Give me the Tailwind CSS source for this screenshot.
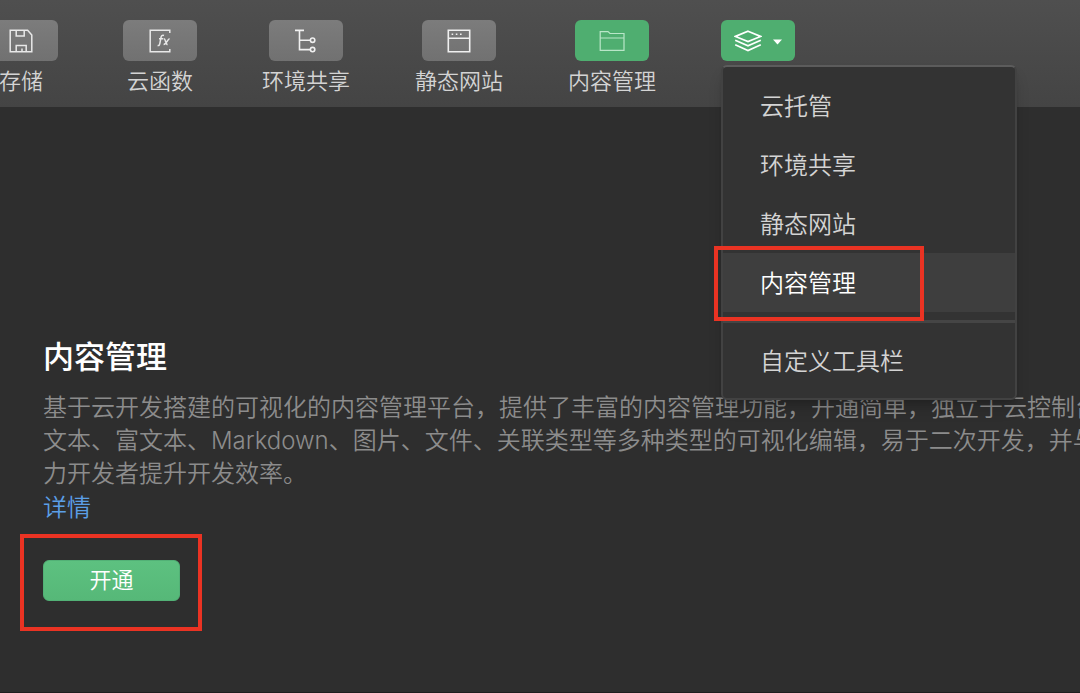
<!DOCTYPE html>
<html lang="zh-CN">
<head>
<meta charset="utf-8">
<meta name="viewport" content="width=device-width, initial-scale=1">
<title>内容管理</title>
<script src="https://cdn.jsdelivr.net/npm/@tailwindcss/browser@4"></script>
</head>
<body class="flex min-h-screen flex-col overflow-x-hidden border-b border-[#1f1f1f] bg-[#2e2e2e] font-['Inter','Noto_Sans_CJK_SC',sans-serif] font-[350] text-[#d4d4d4]">
<header class="h-[107px] bg-linear-to-b from-[#4f4f4f] to-[#444444] pt-5">
  <nav class="-ml-4 flex items-start gap-[65px] text-[22px] leading-[30px] whitespace-nowrap" aria-label="工具栏">
    <div class="flex shrink-0 flex-col items-center gap-[5px]">
      <button id="b1" aria-labelledby="l1" class="flex h-[41px] w-[74px] items-center justify-center rounded-md bg-linear-to-b from-[#7c7c7c] to-[#717171] text-[#e8e8e8]">
        <svg class="size-6" viewBox="0 0 24 24" fill="none" stroke="currentColor" stroke-width="1.5"><path d="M1.2 1.2H18.6L22.8 6V22.8H1.2ZM7.2 1.2V7H15.2V1.2M7.2 22.8V16.4H17.2V22.8M13 19.6V22.8"/></svg>
      </button>
      <label id="l1" for="b1">存储</label>
    </div>
    <div class="flex shrink-0 flex-col items-center gap-[5px]">
      <button id="b2" aria-labelledby="l2" class="flex h-[41px] w-[74px] items-center justify-center rounded-md bg-linear-to-b from-[#7c7c7c] to-[#717171] text-[#e8e8e8]">
        <svg class="size-6" viewBox="0 0 24 24" fill="none" stroke="currentColor" stroke-width="1.5"><path d="M21.8 4V1.2H2.2V22.8H21.8V20"/><path d="M16 6.5c-1.8-.7-2.7.3-3 2l-1.2 6.2c-.3 1.6-1 2.2-2.2 1.8M11 9.8h4.4M16 9.8c1.6 0 1.6 5.7 3.6 5.7M21.6 9.8c-1.8 0-3.4 5.7-6 5.7"/></svg>
      </button>
      <label id="l2" for="b2">云函数</label>
    </div>
    <div class="flex shrink-0 flex-col items-center gap-[5px]">
      <button id="b3" aria-labelledby="l3" class="flex h-[41px] w-[74px] items-center justify-center rounded-md bg-linear-to-b from-[#7c7c7c] to-[#717171] text-[#f0f0f0]">
        <svg class="size-6" viewBox="0 0 24 24" fill="none" stroke="currentColor" stroke-width="1.6"><path d="M1 1.4H10M5.5 1.4V20.6H16.4M5.5 11.2H16.4"/><circle cx="18.6" cy="11.2" r="2.2"/><circle cx="18.6" cy="20.6" r="2.2"/></svg>
      </button>
      <label id="l3" for="b3">环境共享</label>
    </div>
    <div class="flex shrink-0 flex-col items-center gap-[5px]">
      <button id="b4" aria-labelledby="l4" class="flex h-[41px] w-[74px] items-center justify-center rounded-md bg-linear-to-b from-[#7c7c7c] to-[#717171] text-[#f0f0f0]">
        <svg class="size-6" viewBox="0 0 24 24" fill="none" stroke="currentColor" stroke-width="1.6"><path d="M1.3 1.3H22.7V22.7H1.3ZM1.3 9.2H22.7"/><path d="M4.6 5.3h1.6M8.8 5.3h1.6M13 5.3h1.6"/></svg>
      </button>
      <label id="l4" for="b4">静态网站</label>
    </div>
    <div class="flex shrink-0 flex-col items-center gap-[5px]">
      <button id="b5" aria-labelledby="l5" class="flex h-[41px] w-[74px] items-center justify-center rounded-md bg-[#4fae70] text-[#b9e6c8]">
        <svg class="h-6 w-[26px]" viewBox="0 0 26 24" fill="none" stroke="currentColor" stroke-width="1.2"><path d="M1.2 21.3V2.6H9L11 4.5H25V21.3ZM1.2 9H25"/></svg>
      </button>
      <label id="l5" for="b5">内容管理</label>
    </div>
    <div class="relative shrink-0">
      <button aria-label="更多" aria-expanded="true" class="flex h-[41px] w-[74px] items-center justify-center gap-[11px] rounded-md bg-[#4fae70] text-white">
        <svg class="h-6 w-7" viewBox="0 0 28 24" fill="none" stroke="currentColor" stroke-width="1.6"><path d="M14 2.2L26.6 7.4L14 12.6L1.4 7.4ZM1.2 11.2L14 16.8L26.8 11.2M1.2 15.8L14 21.6L26.8 15.8"/></svg>
        <svg class="h-6 w-[9px]" viewBox="0 0 9 24" fill="currentColor"><path d="M0 10.4H9L4.5 15.4Z"/></svg>
      </button>
      <div role="menu" class="absolute top-[45px] left-0 z-10 w-[296px] rounded-md border-2 border-[#424242] border-t-[#5c5c5c] bg-[#333333] pt-[9px] pb-2 text-2xl shadow-lg shadow-black/20">
        <button role="menuitem" class="flex h-[59px] w-full items-center px-[37px] pt-0.5">云托管</button>
        <button role="menuitem" class="flex h-[59px] w-full items-center px-[37px] pt-0.5">环境共享</button>
        <button role="menuitem" class="flex h-[59px] w-full items-center px-[37px] pt-0.5">静态网站</button>
        <button role="menuitem" class="relative flex h-[59px] w-full items-center bg-[#3e3e3e] px-[37px] pt-0.5 text-white">内容管理<span class="absolute -top-[7px] -left-[9px] h-[75px] w-[210px] border-4 border-[#ea3323]"></span></button>
        <hr class="my-2 border-t-3 border-[#454545]">
        <button role="menuitem" class="flex h-[59px] w-full items-center px-[37px] pt-0.5">自定义工具栏</button>
      </div>
    </div>
  </nav>
</header>
<main class="flex flex-col items-start pt-[227px] pl-[43px]">
  <h1 class="text-[31px] leading-[46px] font-medium text-white">内容管理</h1>
  <p class="mt-[11px] w-full overflow-hidden text-2xl leading-[33px] whitespace-nowrap text-[#8c8c8c]">基于云开发搭建的可视化的内容管理平台，提供了丰富的内容管理功能，开通简单，独立于云控制台<br>文本、富文本、Markdown、图片、文件、关联类型等多种类型的可视化编辑，易于二次开发，并与<br>力开发者提升开发效率。</p>
  <a href="#" class="mt-px text-2xl leading-[33px] text-[#5b9fe6]">详情</a>
  <div class="relative mt-9">
    <button class="flex h-[41px] w-[137px] items-center justify-center rounded-md border border-[#52b176] bg-linear-to-b from-[#5dc180] to-[#56b878] text-[22px] text-white">开通</button>
    <span class="absolute -top-[26px] -left-[23px] h-[97px] w-[182px] border-4 border-[#ea3323]"></span>
  </div>
</main>
</body>
</html>
